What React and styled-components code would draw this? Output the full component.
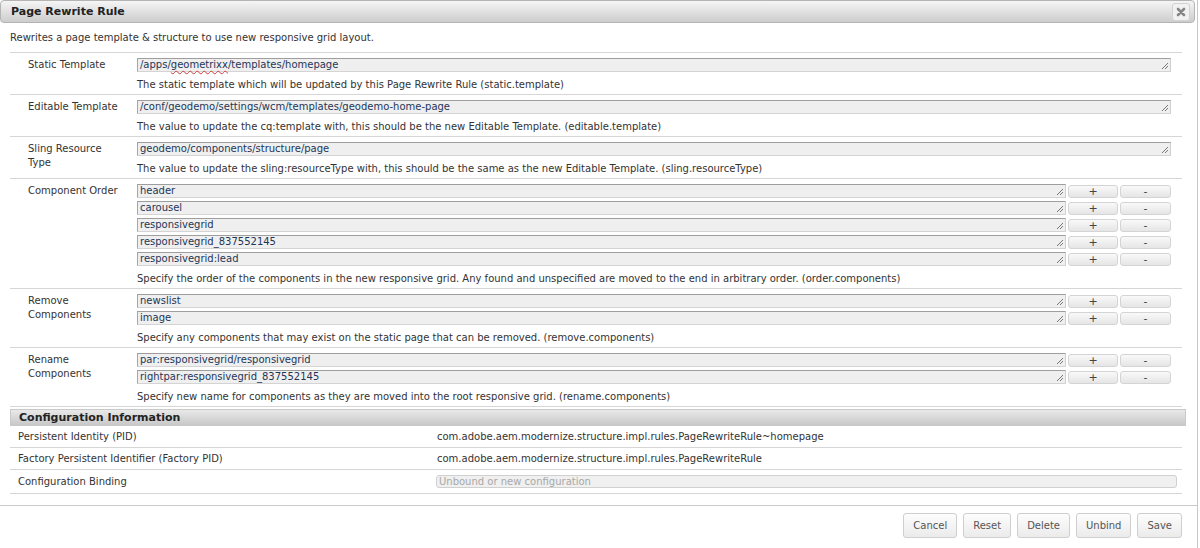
import React from 'react';
import styled, { createGlobalStyle } from 'styled-components';

const Global = createGlobalStyle`
  html, body {
    margin: 0;
    background: #fff;
  }
  body {
    font-family: 'DejaVu Sans', Verdana, sans-serif;
    font-size: 10px;
    color: #333;
  }
`

const Dialog = styled.div`
  box-sizing: border-box;
  width: 1198px;
  height: 548px;
  border-right: 1px solid #c6c6c6;
  display: flex;
  flex-direction: column;
`

const TitleBar = styled.div`
  box-sizing: border-box;
  height: 23px;
  margin: 0 2px 0 0;
  padding: 0 4px 0 10px;
  border: 1px solid #b4b4b4;
  border-radius: 4px;
  background: linear-gradient(#f5f5f5, #cdcdcd);
  display: flex;
  align-items: center;
  justify-content: space-between;
`

const Title = styled.span`
  font-size: 11px;
  font-weight: bold;
  color: #222;
`

const Close = styled.button`
  box-sizing: border-box;
  width: 18px;
  height: 18px;
  padding: 0;
  border: 1px solid #d2d2d2;
  border-radius: 3px;
  background: #f1f1f1;
  display: flex;
  align-items: center;
  justify-content: center;
`

const Body = styled.div`
  padding: 0 15px 0 10px;
`

const Intro = styled.p`
  margin: 8px 0 7px;
  line-height: 14px;
`

const Table = styled.div`
  border-top: 1px solid #d6d6d6;
`

const Row = styled.div`
  display: flex;
  padding: 5px 11px 2px 0;
  border-bottom: 1px solid #d6d6d6;
`

const Label = styled.div`
  box-sizing: border-box;
  width: 127px;
  padding: 0 13px 0 18px;
  line-height: 14px;
`

const Value = styled.div`
  flex: 1;
  display: flex;
  flex-direction: column;
  gap: 3px;
`

const FieldLine = styled.div`
  display: flex;
  align-items: flex-start;
  gap: 2px;
`

const Field = styled.div`
  position: relative;
  flex: 1;
  box-sizing: border-box;
  height: 14px;
  padding: 0 2px;
  border: 1px solid;
  border-color: #9e9e9e #cfcfcf #d4d4d4 #a6a6a6;
  background: #efefef;
  color: #1e3658;
  line-height: 12px;
  white-space: nowrap;
`

const Grip = styled.svg`
  position: absolute;
  right: 1px;
  bottom: 1px;
`

const Squiggle = styled.span`
  text-decoration: underline wavy #d23a3a;
  text-decoration-thickness: 1px;
  text-underline-offset: 2px;
`

const SmallButton = styled.button`
  box-sizing: border-box;
  width: ${p => p.$w}px;
  height: 13px;
  margin-top: 1px;
  padding: 0;
  border: 1px solid #d4d4d4;
  border-radius: 3px;
  background: linear-gradient(#f9f9f9, #e5e5e5);
  font-family: 'DejaVu Sans', Verdana, sans-serif;
  font-size: 11px;
  line-height: 11px;
  color: #444;
`

const Help = styled.div`
  margin-top: 3px;
  line-height: 14px;
`

const ConfigHeader = styled.div`
  box-sizing: border-box;
  height: 17px;
  margin: 2px -4px 0 0;
  padding-left: 8px;
  border: 1px solid #c9c9c9;
  background: linear-gradient(#e9e9e9, #c8c8c8);
  font-size: 11px;
  font-weight: bold;
  color: #222;
  display: flex;
  align-items: center;
`

const ConfigRow = styled.div`
  display: grid;
  grid-template-columns: 419px 1fr;
  align-items: center;
  height: ${p => p.$h || 21}px;
  padding: 0 5px 0 8px;
  border-bottom: 1px solid #d6d6d6;
`

const Binding = styled.div`
  box-sizing: border-box;
  height: 13px;
  margin-left: -1px;
  padding: 0 2px;
  border: 1px solid #d0d0d0;
  border-radius: 3px;
  background: #f0f0f0;
  color: #a8a8a8;
  line-height: 11px;
`

const Footer = styled.div`
  margin-top: 11px;
  border-top: 1px solid #cacaca;
  padding: 7px 15px 0 0;
  display: flex;
  justify-content: flex-end;
  gap: 6px;
`

const ActionButton = styled.button`
  box-sizing: border-box;
  height: 25px;
  padding: 0 9px;
  border: 1px solid #cfcfcf;
  border-radius: 3px;
  background: linear-gradient(#fdfdfd, #ebebeb);
  font-family: 'DejaVu Sans', Verdana, sans-serif;
  font-size: 10px;
  color: #555;
`

const ResizeGrip = () => (
  <Grip width="8" height="8" viewBox="0 0 8 8">
    <path d="M7 1 L1 7 M7 4 L4 7" stroke="#777" strokeWidth="1" fill="none" />
  </Grip>
)

const Input = ({ children }) => (
  <Field>
    {children}
    <ResizeGrip />
  </Field>
)

const MultiField = ({ values }) => (
  <>
    {values.map(v => (
      <FieldLine key={v}>
        <Input>{v}</Input>
        <SmallButton $w={50}>+</SmallButton>
        <SmallButton $w={51}>-</SmallButton>
      </FieldLine>
    ))}
  </>
)

const App = () => {
  return (
    <Dialog>
      <Global />
      <TitleBar>
        <Title>Page Rewrite Rule</Title>
        <Close aria-label="close">
          <svg width="10" height="10" viewBox="0 0 10 10">
            <path d="M2 2 L8 8 M8 2 L2 8" stroke="#858585" strokeWidth="2.6" strokeLinecap="round" />
          </svg>
        </Close>
      </TitleBar>
      <Body>
        <Intro>Rewrites a page template &amp; structure to use new responsive grid layout.</Intro>
        <Table>
          <Row>
            <Label>Static Template</Label>
            <Value>
              <Input>/apps/<Squiggle>geometrixx</Squiggle>/templates/homepage</Input>
              <Help>The static template which will be updated by this Page Rewrite Rule (static.template)</Help>
            </Value>
          </Row>
          <Row>
            <Label>Editable Template</Label>
            <Value>
              <Input>/conf/geodemo/settings/wcm/templates/geodemo-home-page</Input>
              <Help>The value to update the cq:template with, this should be the new Editable Template. (editable.template)</Help>
            </Value>
          </Row>
          <Row>
            <Label>Sling Resource Type</Label>
            <Value>
              <Input>geodemo/components/structure/page</Input>
              <Help>The value to update the sling:resourceType with, this should be the same as the new Editable Template. (sling.resourceType)</Help>
            </Value>
          </Row>
          <Row>
            <Label>Component Order</Label>
            <Value>
              <MultiField values={['header', 'carousel', 'responsivegrid', 'responsivegrid_837552145', 'responsivegrid:lead']} />
              <Help>Specify the order of the components in the new responsive grid. Any found and unspecified are moved to the end in arbitrary order. (order.components)</Help>
            </Value>
          </Row>
          <Row>
            <Label>Remove Components</Label>
            <Value>
              <MultiField values={['newslist', 'image']} />
              <Help>Specify any components that may exist on the static page that can be removed. (remove.components)</Help>
            </Value>
          </Row>
          <Row>
            <Label>Rename Components</Label>
            <Value>
              <MultiField values={['par:responsivegrid/responsivegrid', 'rightpar:responsivegrid_837552145']} />
              <Help>Specify new name for components as they are moved into the root responsive grid. (rename.components)</Help>
            </Value>
          </Row>
        </Table>
        <ConfigHeader>Configuration Information</ConfigHeader>
        <ConfigRow>
          <span>Persistent Identity (PID)</span>
          <span>com.adobe.aem.modernize.structure.impl.rules.PageRewriteRule~homepage</span>
        </ConfigRow>
        <ConfigRow>
          <span>Factory Persistent Identifier (Factory PID)</span>
          <span>com.adobe.aem.modernize.structure.impl.rules.PageRewriteRule</span>
        </ConfigRow>
        <ConfigRow $h={23}>
          <span>Configuration Binding</span>
          <Binding>Unbound or new configuration</Binding>
        </ConfigRow>
      </Body>
      <Footer>
        <ActionButton>Cancel</ActionButton>
        <ActionButton>Reset</ActionButton>
        <ActionButton>Delete</ActionButton>
        <ActionButton>Unbind</ActionButton>
        <ActionButton>Save</ActionButton>
      </Footer>
    </Dialog>
  );
}

export default App;
